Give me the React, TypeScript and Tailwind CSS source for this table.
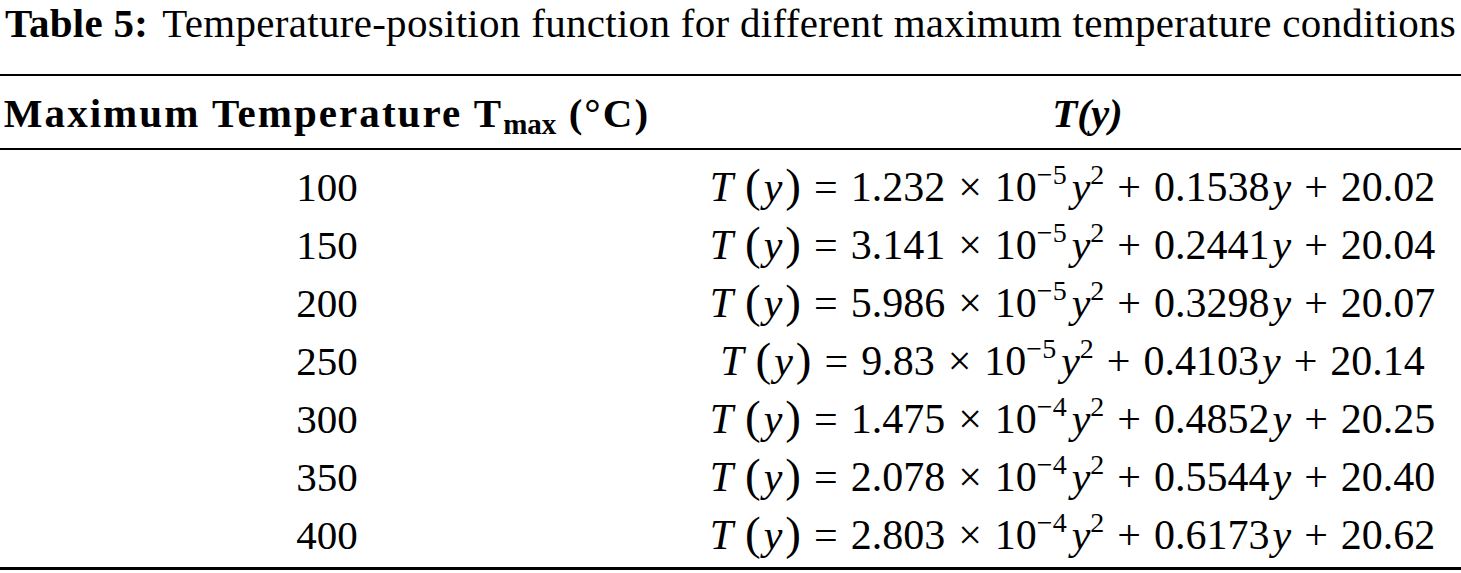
import React from 'react';

const rows = [
  { t: '100', a: '1.232', e: '5', b: '0.1538', c: '20.02' },
  { t: '150', a: '3.141', e: '5', b: '0.2441', c: '20.04' },
  { t: '200', a: '5.986', e: '5', b: '0.3298', c: '20.07' },
  { t: '250', a: '9.83', e: '5', b: '0.4103', c: '20.14' },
  { t: '300', a: '1.475', e: '4', b: '0.4852', c: '20.25' },
  { t: '350', a: '2.078', e: '4', b: '0.5544', c: '20.40' },
  { t: '400', a: '2.803', e: '4', b: '0.6173', c: '20.62' },
];

const Formula: React.FC<{ a: string; e: string; b: string; c: string }> = ({ a, e, b, c }) => (
  <span className="whitespace-nowrap text-[42px]">
    <i>T</i>
    <span className="ml-[12px] text-[47px] leading-none">(</span>
    <i className="mx-[3px]">y</i>
    <span className="text-[47px] leading-none">)</span>
    <span className="mx-[13px]">=</span>
    {a}
    <span className="mx-[13px]">×</span>
    10
    <sup className="text-[28px] -top-[17px] mr-[5px]">−{e}</sup>
    <i>y</i>
    <sup className="text-[28px] -top-[17px]">2</sup>
    <span className="mx-[13px]">+</span>
    {b}
    <i className="ml-[3px]">y</i>
    <span className="mx-[13px]">+</span>
    {c}
  </span>
);

export default function App() {
  return (
    <div className="w-[1461px] h-[573px] bg-white text-black font-['Liberation_Serif',serif] text-[41px] overflow-hidden">
      <div className="leading-[47px] pl-[5px] whitespace-nowrap tracking-[0.3px]">
        <b>Table 5:</b>
        <span className="ml-[14px]">Temperature-position function for different maximum temperature conditions</span>
      </div>

      <div className="mt-[27px] border-t-[2px] border-black" />
      <div className="grid grid-cols-[654px_1fr] h-[72px] pt-[17px] leading-[40px] font-bold">
        <div className="text-center whitespace-nowrap tracking-[0.05em]">
          Maximum Temperature T<sub className="text-[29px] -bottom-[7px] tracking-normal">max</sub> (°C)
        </div>
        <div className="text-center pl-[60px] italic">T(y)</div>
      </div>
      <div className="border-t-[2px] border-black" />

      <div className="pt-[8px]">
        {rows.map((r) => (
          <div key={r.t} className="grid grid-cols-[654px_1fr] h-[58px] leading-[58px]">
            <div className="text-center">{r.t}</div>
            <div className="text-center pl-[30px]">
              <Formula a={r.a} e={r.e} b={r.b} c={r.c} />
            </div>
          </div>
        ))}
      </div>
      <div className="mt-[3px] border-t-[3px] border-black" />
    </div>
  );
}
